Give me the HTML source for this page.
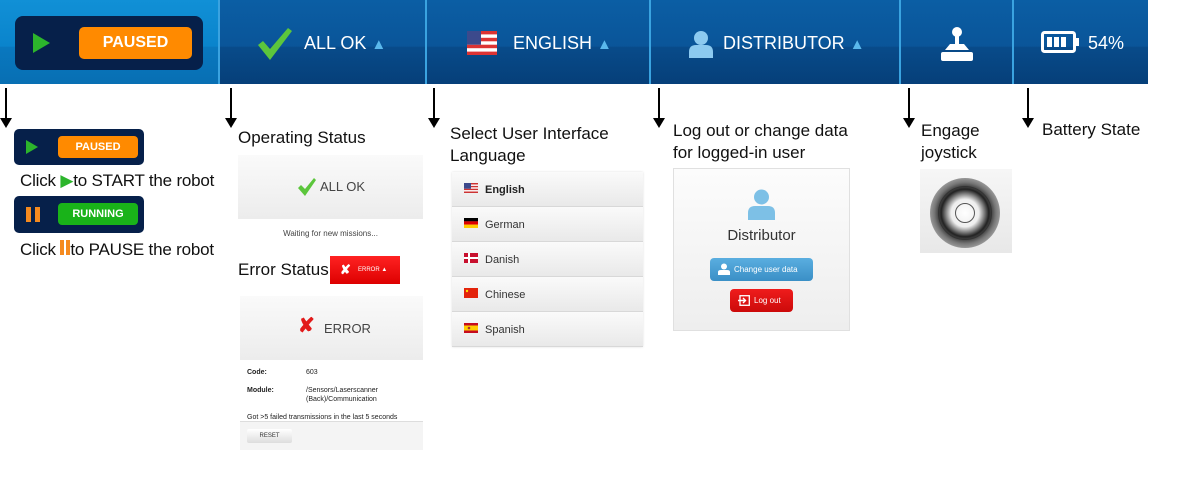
<!DOCTYPE html><html><head><meta charset="utf-8"><style>
*{margin:0;padding:0;box-sizing:border-box}
body{width:1200px;height:484px;background:#fff;position:relative;overflow:hidden;font-family:"Liberation Sans",sans-serif}
.a{position:absolute}
.bar{left:0;top:0;width:1148px;height:84px;background:linear-gradient(#0b5ea4,#0a5599 55%,#084b8a 56%,#063f79)}
.sec0{left:0;top:0;width:218px;height:84px;background:linear-gradient(#1190d6,#0a84cc 55%,#0978bf 56%,#086fb3)}
.div{top:0;width:2px;height:84px;background:#3aa3e0}
.tt{color:#fff;font-size:18px;top:33px}
.tri{color:#5ab8ec;font-size:15px}
.arr{width:2px;background:#000}
.arr:after{content:"";position:absolute;left:-5px;bottom:-8px;border-left:6px solid transparent;border-right:6px solid transparent;border-top:10px solid #000}
.lbl{font-size:17px;color:#111;line-height:22px}
.lang{left:452px;width:191px;height:35px;background:linear-gradient(#fafafa,#e9e9e9);border-bottom:1px solid #d8d8d8;font-size:11px;color:#333;padding:12px 0 0 33px}
.flag{position:absolute;left:12px;top:11px;width:14px;height:10px}
</style></head><body>
<div class="a bar"></div>
<div class="a sec0"></div>
<div class="a" style="left:15px;top:16px;width:188px;height:54px;background:#06204a;border-radius:8px"></div>
<svg class="a" style="left:33px;top:33px" width="18" height="20"><polygon points="0,0 17,10 0,20" fill="#2cb52c"/></svg>
<div class="a" style="left:79px;top:27px;width:113px;height:32px;background:#ff8a00;border-radius:5px;color:#fff;font-weight:bold;font-size:16px;text-align:center;line-height:32px">PAUSED</div>
<div class="a div" style="left:218px"></div>
<div class="a div" style="left:425px"></div>
<div class="a div" style="left:649px"></div>
<div class="a div" style="left:899px"></div>
<div class="a div" style="left:1012px"></div>
<svg class="a" style="left:257px;top:27px" width="36" height="34"><path d="M1 18 L6 14 L13 22 L31 1 L35 4 L13 33 Z" fill="#5cc63c"/></svg>
<div class="a tt" style="left:304px">ALL OK <span class="tri">▲</span></div>
<svg class="a" style="left:467px;top:31px" width="30" height="24"><rect width="30" height="24" fill="#d33"/><g fill="#fff"><rect y="3.4" width="30" height="3.4"/><rect y="10.3" width="30" height="3.4"/><rect y="17.2" width="30" height="3.4"/></g><rect width="14" height="13.7" fill="#3c4a8c"/></svg>
<div class="a tt" style="left:513px">ENGLISH <span class="tri">▲</span></div>
<svg class="a" style="left:688px;top:30px" width="26" height="28"><circle cx="13" cy="8" r="7" fill="#8ccaf0"/><path d="M1 28 V22 Q1 15 8 15 H18 Q25 15 25 22 V28 Z" fill="#8ccaf0"/></svg>
<div class="a tt" style="left:723px">DISTRIBUTOR <span class="tri">▲</span></div>
<svg class="a" style="left:939px;top:26px" width="36" height="36"><circle cx="18" cy="6" r="5" fill="#fff"/><rect x="16" y="9" width="4" height="12" fill="#fff"/><path d="M6 24 L11 18 H25 L30 24 Z" fill="#fff"/><rect x="2" y="26" width="32" height="9" rx="2" fill="#fff"/></svg>
<svg class="a" style="left:1041px;top:31px" width="40" height="22"><rect x="1.5" y="1.5" width="32" height="19" rx="2" fill="none" stroke="#fff" stroke-width="3"/><rect x="34" y="7" width="4" height="8" fill="#fff"/><rect x="6" y="6" width="5" height="10" fill="#fff"/><rect x="13" y="6" width="5" height="10" fill="#fff"/><rect x="20" y="6" width="5" height="10" fill="#fff"/></svg>
<div class="a tt" style="left:1088px">54%</div>

<div class="a arr" style="left:5px;top:88px;height:32px"></div>
<div class="a arr" style="left:230px;top:88px;height:32px"></div>
<div class="a arr" style="left:433px;top:88px;height:32px"></div>
<div class="a arr" style="left:658px;top:88px;height:32px"></div>
<div class="a arr" style="left:908px;top:88px;height:32px"></div>
<div class="a arr" style="left:1027px;top:88px;height:32px"></div>

<!-- col 1 -->
<div class="a" style="left:14px;top:129px;width:130px;height:36px;background:#06204a;border-radius:5px"></div>
<svg class="a" style="left:26px;top:140px" width="12" height="14"><polygon points="0,0 12,7 0,14" fill="#2cb52c"/></svg>
<div class="a" style="left:58px;top:136px;width:80px;height:22px;background:#ff8a00;border-radius:4px;color:#fff;font-weight:bold;font-size:11px;text-align:center;line-height:22px">PAUSED</div>
<div class="a lbl" style="left:20px;top:170px;letter-spacing:-0.2px">Click <span style="color:#2cb52c">▶</span>to START the robot</div>
<div class="a" style="left:14px;top:196px;width:130px;height:37px;background:#06204a;border-radius:5px"></div>
<div class="a" style="left:26px;top:207px;width:5px;height:15px;background:#f58a1f"></div>
<div class="a" style="left:35px;top:207px;width:5px;height:15px;background:#f58a1f"></div>
<div class="a" style="left:58px;top:203px;width:80px;height:22px;background:#19b319;border-radius:4px;color:#fff;font-weight:bold;font-size:11px;text-align:center;line-height:22px">RUNNING</div>
<div class="a lbl" style="left:20px;top:239px;letter-spacing:-0.2px">Click <span style="display:inline-block;width:4px;height:15px;background:#f58a1f"></span><span style="display:inline-block;width:4px;height:15px;background:#f58a1f;margin-left:2px"></span>to PAUSE the robot</div>

<!-- col 2 -->
<div class="a lbl" style="left:238px;top:127px">Operating Status</div>
<div class="a" style="left:238px;top:155px;width:185px;height:64px;background:linear-gradient(#fafafa,#ececec);font-size:13px;color:#444;padding-top:24px;padding-left:82px">ALL OK</div>
<svg class="a" style="left:297px;top:177px" width="20" height="20"><path d="M1 11 L4 8 L8 12 L17 1 L19 3 L8 19 Z" fill="#5cc63c"/></svg>
<div class="a" style="left:238px;top:229px;width:185px;text-align:center;font-size:8px;color:#444">Waiting for new missions...</div>
<div class="a lbl" style="left:238px;top:259px">Error Status</div>
<div class="a" style="left:330px;top:256px;width:70px;height:28px;background:linear-gradient(#f22,#d00);color:#fff;font-size:6px;line-height:28px;padding-left:28px">ERROR ▲</div>
<div class="a" style="left:340px;top:262px;color:#fff;font-size:13px;font-weight:bold">✘</div>
<div class="a" style="left:240px;top:296px;width:183px;height:64px;background:linear-gradient(#fafafa,#ececec);font-size:13px;color:#444;padding:25px 0 0 84px">ERROR</div>
<div class="a" style="left:298px;top:316px;color:#e21a1a;font-size:20px;font-weight:bold;line-height:20px">✘</div>
<div class="a" style="left:247px;top:368px;font-size:7px;color:#222;line-height:9px">
<b>Code:</b><span style="position:absolute;left:59px;white-space:nowrap">603</span><br><br style="line-height:3px"><b>Module:</b><span style="position:absolute;left:59px;white-space:nowrap">/Sensors/Laserscanner<br>(Back)/Communication</span><br><br><br style="line-height:6px"><span style="white-space:nowrap">Got &gt;5 failed transmissions in the last 5 seconds</span></div>
<div class="a" style="left:240px;top:421px;width:183px;height:29px;background:#f4f4f4;border-top:1px solid #ddd"></div>
<div class="a" style="left:247px;top:429px;width:45px;height:14px;background:linear-gradient(#fff,#ddd);border-radius:2px;font-size:6px;text-align:center;line-height:14px;color:#333">RESET</div>

<!-- col 3 -->
<div class="a lbl" style="left:450px;top:123px">Select User Interface<br>Language</div>
<div class="a" style="left:452px;top:172px;width:191px;height:175px;box-shadow:0 0 2px #ddd"></div>
<div class="a lang" style="top:172px;font-weight:bold;color:#222"><svg class="flag" viewBox="0 0 14 10"><rect width="14" height="10" fill="#c33"/><g fill="#fff"><rect y="1.5" width="14" height="1.4"/><rect y="4.3" width="14" height="1.4"/><rect y="7.1" width="14" height="1.4"/></g><rect width="7" height="5.7" fill="#3c4a8c"/></svg>English</div>
<div class="a lang" style="top:207px"><svg class="flag" viewBox="0 0 14 10"><rect width="14" height="3.4" fill="#000"/><rect y="3.3" width="14" height="3.4" fill="#d00"/><rect y="6.6" width="14" height="3.4" fill="#fc0"/></svg>German</div>
<div class="a lang" style="top:242px"><svg class="flag" viewBox="0 0 14 10"><rect width="14" height="10" fill="#c8102e"/><rect x="4" width="2" height="10" fill="#fff"/><rect y="4" width="14" height="2" fill="#fff"/></svg>Danish</div>
<div class="a lang" style="top:277px"><svg class="flag" viewBox="0 0 14 10"><rect width="14" height="10" fill="#e3230b"/><circle cx="3" cy="3" r="1.2" fill="#fd0"/></svg>Chinese</div>
<div class="a lang" style="top:312px"><svg class="flag" viewBox="0 0 14 10"><rect width="14" height="10" fill="#c60b1e"/><rect y="2.5" width="14" height="5" fill="#fc0"/><circle cx="5" cy="5" r="1.3" fill="#a33"/></svg>Spanish</div>

<!-- col 4 -->
<div class="a lbl" style="left:673px;top:120px">Log out or change data<br>for logged-in user</div>
<div class="a" style="left:673px;top:168px;width:177px;height:163px;background:linear-gradient(#fcfcfc,#eeeeee);border:1px solid #e0e0e0"></div>
<svg class="a" style="left:747px;top:189px" width="29" height="31"><circle cx="14.5" cy="8" r="7.5" fill="#7dc0e6"/><path d="M1 31 V24 Q1 17 8 17 H21 Q28 17 28 24 V31 Z" fill="#7dc0e6"/></svg>
<div class="a" style="left:673px;top:227px;width:177px;text-align:center;font-size:15px;color:#333">Distributor</div>
<div class="a" style="left:710px;top:258px;width:103px;height:23px;background:linear-gradient(#5aaee0,#3a8fc6);border-radius:4px;color:#fff;font-size:8px;line-height:23px;padding-left:24px">Change user data</div>
<svg class="a" style="left:718px;top:263px" width="12" height="12"><circle cx="6" cy="3.5" r="3" fill="#fff"/><path d="M0 12 V9 Q0 7 3 7 H9 Q12 7 12 9 V12Z" fill="#fff"/></svg>
<div class="a" style="left:730px;top:289px;width:63px;height:23px;background:linear-gradient(#ef1c1c,#cc0a0a);border-radius:4px;color:#fff;font-size:8px;line-height:23px;padding-left:24px">Log out</div>
<svg class="a" style="left:738px;top:295px" width="12" height="11"><rect x="2" y=".7" width="9.3" height="9.6" fill="none" stroke="#fff" stroke-width="1.3"/><path d="M0 5.5 H7 M5 3 L7.5 5.5 L5 8" stroke="#fff" stroke-width="1.4" fill="none"/></svg>

<!-- col 5 -->
<div class="a lbl" style="left:921px;top:120px">Engage<br>joystick</div>
<div class="a" style="left:920px;top:169px;width:92px;height:84px;background:linear-gradient(#f6f6f6,#e8e8e8)"></div>
<div class="a" style="left:930px;top:178px;width:70px;height:70px;border-radius:50%;background:radial-gradient(circle,#fff 0%,#eee 28%,#222 48%,#777 62%,#bbb 80%,#e5e5e5 100%)"></div>
<div class="a" style="left:938px;top:186px;width:54px;height:54px;border-radius:50%;border:1px solid #333"></div>
<div class="a" style="left:955px;top:203px;width:20px;height:20px;border-radius:50%;border:1px solid #555"></div>

<!-- col 6 -->
<div class="a lbl" style="left:1042px;top:119px">Battery State</div>
</body></html>
